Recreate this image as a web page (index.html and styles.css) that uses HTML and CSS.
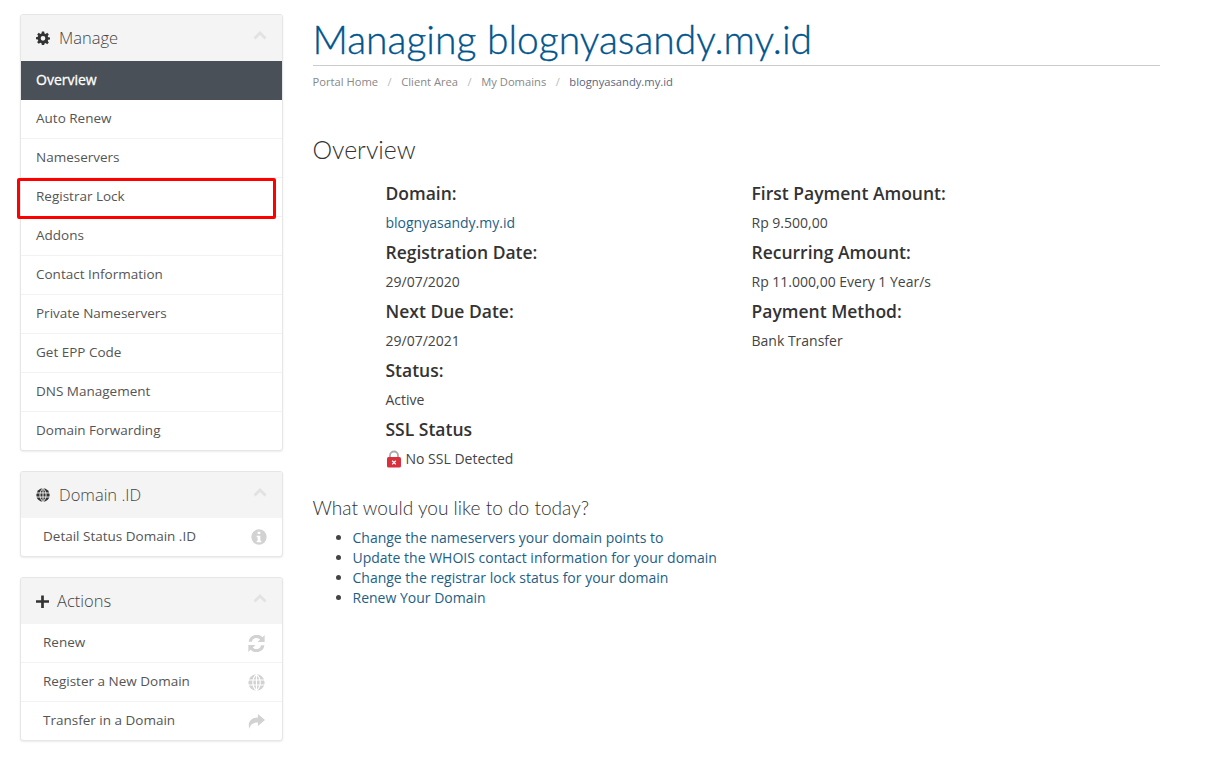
FILE: index.html
```html
<!DOCTYPE html>
<html lang="en">
<head>
    <meta charset="UTF-8">
    <meta name="viewport" content="width=device-width, initial-scale=1.0">
    <title>Managing blognyasandy.my.id</title>
    <link rel="stylesheet" href="styles.css">
</head>
<body>
    <div class="page">
        <aside class="sidebar">
            <div class="panel">
                <div class="panel-heading">
                    <svg class="head-icon" viewBox="0 0 24 24"><path fill-rule="evenodd" d="M10 1h4l.6 3.200 1.900.8L19.200 3.100l2.800 2.800-1.900 2.700.8 1.900L24 11v3.500l-3.100.6-.8 1.900 1.900 2.700-2.800 2.800-2.700-1.900-1.900.8L14 24h-4l-.6-3.200-1.900-.8-2.700 1.900L2 19.100l1.900-2.700-.8-1.900L0 14v-3.500l3.100-.6.8-1.900L2 5.900l2.800-2.800 2.700 1.900 1.900-.8L10 1zm2 7.500a4 4 0 1 0 0 8 4 4 0 0 0 0-8z"/></svg>
                    <span class="panel-title">Manage</span>
                    <svg class="chevron" viewBox="0 0 14 9"><path d="M1.500 7.500 7 2l5.500 5.500" /></svg>
                </div>
                <a class="item active">Overview</a>
                <a class="item">Auto Renew</a>
                <a class="item">Nameservers</a>
                <a class="item">Registrar Lock</a>
                <a class="item">Addons</a>
                <a class="item">Contact Information</a>
                <a class="item">Private Nameservers</a>
                <a class="item">Get EPP Code</a>
                <a class="item">DNS Management</a>
                <a class="item">Domain Forwarding</a>
            </div>

            <div class="panel">
                <div class="panel-heading">
                    <svg class="head-icon" viewBox="0 0 24 24"><circle cx="12" cy="12" r="11.500"/><path class="globe-lines" d="M0 8.500h24M0 15.500h24M12 0v24M12 .5C5 6 5 18 12 23.500M12 .5C19 6 19 18 12 23.500"/></svg>
                    <span class="panel-title">Domain .ID</span>
                    <svg class="chevron" viewBox="0 0 14 9"><path d="M1.500 7.500 7 2l5.500 5.500" /></svg>
                </div>
                <a class="item action">Detail Status Domain .ID
                    <svg class="item-icon info" viewBox="0 0 24 24"><path fill-rule="evenodd" d="M12 .5a11.500 11.500 0 1 1 0 23 11.500 11.500 0 0 1 0-23zM10 4v3.500h4V4h-4zM8.500 10v2.500H10v5H8.500V20h7v-2.500H14V10H8.500z"/></svg>
                </a>
            </div>

            <div class="panel">
                <div class="panel-heading">
                    <svg class="head-icon plus" viewBox="0 0 24 24"><path d="M9.500 1h5v8.500H24v5h-9.500V24h-5v-9.500H0v-5h9.500z"/></svg>
                    <span class="panel-title">Actions</span>
                    <svg class="chevron" viewBox="0 0 14 9"><path d="M1.500 7.500 7 2l5.500 5.500" /></svg>
                </div>
                <a class="item action">Renew
                    <svg class="item-icon" viewBox="0 0 24 24"><path d="M23.500 0v10h-10l3.700-3.700A7 7 0 0 0 5.300 9.500H.8A11.500 11.500 0 0 1 20.400 3.100L23.500 0zM.5 24V14h10l-3.700 3.700a7 7 0 0 0 11.900-3.200h4.500A11.500 11.500 0 0 1 3.600 20.900L.5 24z"/></svg>
                </a>
                <a class="item action">Register a New Domain
                    <svg class="item-icon" viewBox="0 0 24 24"><circle cx="12" cy="12" r="11.500"/><path class="globe-lines" d="M0 8.500h24M0 15.500h24M12 0v24M12 .5C5 6 5 18 12 23.500M12 .5C19 6 19 18 12 23.500"/></svg>
                </a>
                <a class="item action">Transfer in a Domain
                    <svg class="item-icon" viewBox="0 0 24 24"><path d="M14 1.500l10 8.500-10 8.500v-5C8 13.500 3.500 15 2 22.500-1 13 4 6.500 14 6.500v-5z"/></svg>
                </a>
            </div>

            <div class="highlight"></div>
        </aside>

        <main class="content">
            <h1>Managing blognyasandy.my.id</h1>
            <ol class="breadcrumb">
                <li>Portal Home</li>
                <li>Client Area</li>
                <li>My Domains</li>
                <li class="current">blognyasandy.my.id</li>
            </ol>

            <h2>Overview</h2>

            <div class="details">
                <div class="details-col">
                    <h4>Domain:</h4>
                    <p><a>blognyasandy.my.id</a></p>
                    <h4>Registration Date:</h4>
                    <p>29/07/2020</p>
                    <h4>Next Due Date:</h4>
                    <p>29/07/2021</p>
                    <h4>Status:</h4>
                    <p>Active</p>
                    <h4>SSL Status</h4>
                    <p class="ssl">
                        <svg class="lock" viewBox="0 0 16 18">
                            <path class="shackle" d="M4 8V5.500a4 4 0 0 1 8 0V8"/>
                            <rect x="1" y="7" width="14" height="10.500" rx="1.500"/>
                            <path class="cross" d="M6.200 10.800l3.600 3.600M9.800 10.800l-3.600 3.600"/>
                        </svg>
                        No SSL Detected
                    </p>
                </div>
                <div class="details-col">
                    <h4>First Payment Amount:</h4>
                    <p>Rp 9.500,00</p>
                    <h4>Recurring Amount:</h4>
                    <p>Rp 11.000,00 Every 1 Year/s</p>
                    <h4>Payment Method:</h4>
                    <p>Bank Transfer</p>
                </div>
            </div>

            <h3>What would you like to do today?</h3>
            <ul class="todo">
                <li><a>Change the nameservers your domain points to</a></li>
                <li><a>Update the WHOIS contact information for your domain</a></li>
                <li><a>Change the registrar lock status for your domain</a></li>
                <li><a>Renew Your Domain</a></li>
            </ul>
        </main>
    </div>
</body>
</html>
```

FILE: styles.css
```css
* {
    box-sizing: border-box;
}
body {
    margin: 0;
    background: #fff;
    font-family: "Open Sans", sans-serif;
    font-size: 14px;
    line-height: 20px;
    color: #444;
}
a {
    color: #1d5f86;
    text-decoration: none;
}
.page {
    display: flex;
    align-items: flex-start;
    padding: 14px 0 0 20px;
}

/* sidebar */
.sidebar {
    position: relative;
    width: 263px;
    flex: none;
}
.panel {
    border: 1px solid #e6e6e6;
    border-radius: 3px;
    box-shadow: 0 1px 2px rgba(0, 0, 0, .08);
    margin-bottom: 20px;
    background: #fff;
    overflow: hidden;
}
.panel-heading {
    display: flex;
    align-items: center;
    height: 46px;
    padding: 0 15px;
    background: #f4f4f4;
}
.head-icon {
    width: 14px;
    height: 14px;
    margin-right: 9px;
    fill: #333;
    flex: none;
}
.head-icon.plus {
    width: 13px;
    height: 13px;
    margin-right: 8px;
}
.globe-lines {
    fill: none;
    stroke: #f4f4f4;
    stroke-width: 1.600;
}
.panel-title {
    font-size: 16.500px;
    font-weight: 300;
    color: #444;
    flex: 1;
}
.chevron {
    width: 14px;
    height: 9px;
    margin-top: -6px;
    fill: none;
    stroke: #e2e2e2;
    stroke-width: 2.800;
}
.item {
    display: flex;
    align-items: center;
    justify-content: space-between;
    height: 39px;
    padding: 0 15px 2px;
    border-bottom: 1px solid #f2f2f2;
    font-size: 13.500px;
    color: #555;
}
.item:last-child {
    height: 38px;
    border-bottom: 0;
}
.item.action {
    padding: 0 17px 2px 22px;
}
.item.active {
    background: #495057;
    border-bottom: 0;
    color: #fff;
    font-size: 14px;
    -webkit-text-stroke: .3px #fff;
}
.item-icon {
    width: 17px;
    height: 17px;
    margin-bottom: -2px;
    fill: #d2d2d2;
    flex: none;
}
.item-icon.info {
    width: 16px;
    height: 16px;
    margin-right: -2px;
}
.item-icon .globe-lines {
    stroke: #fff;
}
.highlight {
    position: absolute;
    left: -3px;
    top: 164px;
    width: 259px;
    height: 41px;
    border: 3px solid #f00;
    border-radius: 2px;
}

/* main column */
.content {
    width: 847px;
    margin-left: 29.500px;
}
h1 {
    margin: 0;
    padding-bottom: 2px;
    height: 52px;
    border-bottom: 1px solid #ccc;
    font-family: Lato, sans-serif;
    font-size: 39px;
    font-weight: 300;
    line-height: 50px;
    color: #00558c;
    -webkit-text-stroke: .35px #00558c;
}
.breadcrumb {
    display: flex;
    list-style: none;
    margin: 7px 0 0;
    padding: 0;
    font-size: 11.200px;
    line-height: 18px;
    color: #888;
}
.breadcrumb li + li::before {
    content: "/";
    padding: 0 9.500px;
    color: #bbb;
}
.breadcrumb .current {
    color: #58667e;
}
h2 {
    margin: 44px 0 0;
    font-family: Lato, sans-serif;
    font-size: 24.800px;
    font-weight: 300;
    line-height: 30px;
    color: #333;
}
.details {
    display: grid;
    grid-template-columns: 366px 1fr;
    margin: 14px 0 0 73px;
}
h4 {
    margin: 0 0 1px;
    font-size: 17.500px;
    font-weight: 600;
    line-height: 28px;
    color: #333;
}
.details-col p {
    margin: 0;
    height: 30px;
    line-height: 30px;
}
.ssl {
    display: flex;
    align-items: center;
    gap: 4px;
}
.lock {
    width: 16px;
    height: 18px;
}
.lock rect {
    fill: #d9303e;
}
.lock .shackle {
    fill: none;
    stroke: #aaa;
    stroke-width: 1.800;
}
.lock .cross {
    fill: none;
    stroke: #fff;
    stroke-width: 1.300;
}
h3 {
    margin: 22px 0 0;
    font-family: Lato, sans-serif;
    font-size: 19.100px;
    font-weight: 300;
    line-height: 24px;
    color: #333;
}
.todo {
    margin: 8px 0 0;
    padding-left: 40px;
}
```
